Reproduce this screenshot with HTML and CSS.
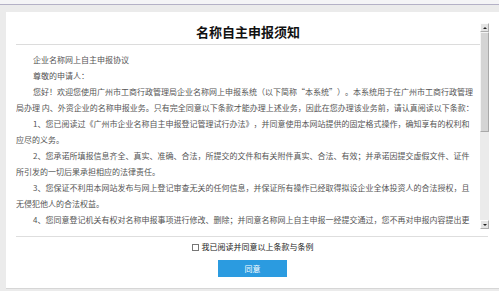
FILE: index.html
```html
<!DOCTYPE html>
<html lang="zh-CN">
<head>
<meta charset="utf-8">
<link rel="stylesheet" href="styles.css">
</head>
<body>
<div class="topbar"></div>
<div class="page">
  <div class="card">
    <div class="scroll">
      <div class="content">
        <h1 class="title">名称自主申报须知</h1>
        <div class="body">
          <p>企业名称网上自主申报协议</p>
          <p>尊敬的申请人：</p>
          <p>您好！欢迎您使用广州市工商行政管理局企业名称网上申报系统（以下简称“本系统”）。本系统用于在广州市工商行政管理局办理 内、外资企业的名称申报业务。只有完全同意以下条款才能办理上述业务，因此在您办理该业务前，请认真阅读以下条款：</p>
          <p>1、您已阅读过《广州市企业名称自主申报登记管理试行办法》，并同意使用本网站提供的固定格式操作，确知享有的权利和应尽的义务。</p>
          <p>2、您承诺所填报信息齐全、真实、准确、合法，所提交的文件和有关附件真实、合法、有效；并承诺因提交虚假文件、证件所引发的一切后果承担相应的法律责任。</p>
          <p>3、您保证不利用本网站发布与网上登记审查无关的任何信息，并保证所有操作已经取得拟设企业全体投资人的合法授权，且无侵犯他人的合法权益。</p>
          <p>4、您同意登记机关有权对名称申报事项进行修改、删除；并同意名称网上自主申报一经提交通过，您不再对申报内容提出更改。</p>
        </div>
      </div>
      <div class="scrollbar">
        <div class="sb-btn"><span class="arrow-up"></span></div>
        <div class="sb-thumb"></div>
        <div class="sb-track"></div>
        <div class="sb-btn"><span class="arrow-down"></span></div>
      </div>
    </div>
    <div class="divider"></div>
    <label class="agree"><span class="check"></span>我已阅读并同意以上条款与条例</label>
    <div class="actions"><button class="btn">同意</button></div>
  </div>
</div>
</body>
</html>
```
FILE: styles.css
```css
html, body {
  margin: 0;
  padding: 0;
}
body {
  background: #ebebeb;
  font-family: "Noto Sans CJK SC", "Liberation Sans", sans-serif;
  width: 499px;
  height: 291px;
  overflow: hidden;
}
.topbar {
  height: 4px;
  background: #f4f4f6;
  border-bottom: 1px solid #b4b1c6;
}
.page {
  padding: 7px 0 0 6px;
}
.card {
  background: #fff;
  height: 277px;
  box-sizing: border-box;
  padding: 11px 10px 0 10px;
  border-bottom: 1px solid #d6d6d6;
  display: flex;
  flex-direction: column;
}
.scroll {
  display: flex;
  height: 206px;
}
.content {
  flex: 1;
  overflow: hidden;
}
.title {
  margin: 0;
  font-size: 13px;
  line-height: 18px;
  font-weight: bold;
  color: #111;
  text-align: center;
  padding-bottom: 3px;
  border-bottom: 1px solid #dcdcdc;
}
.body {
  padding: 7px 5px 0 0;
  font-size: 8px;
  line-height: 16px;
  color: #555;
  text-spacing-trim: space-all;
}
.body p {
  margin: 0;
  text-indent: 17px;
}
.scrollbar {
  width: 9px;
  display: flex;
  flex-direction: column;
  background: #e9e9e9;
}
.sb-btn {
  height: 9px;
  box-sizing: border-box;
  background: #e4e4e4;
  border: 1px solid #adadad;
  border-top-color: #fdfdfd;
  border-left-color: #fdfdfd;
  display: flex;
  align-items: center;
  justify-content: center;
}
.arrow-up {
  width: 0;
  height: 0;
  border-left: 2px solid transparent;
  border-right: 2px solid transparent;
  border-bottom: 2px solid #222;
}
.arrow-down {
  width: 0;
  height: 0;
  border-left: 2px solid transparent;
  border-right: 2px solid transparent;
  border-top: 2px solid #222;
}
.sb-thumb {
  height: 100px;
  box-sizing: border-box;
  background: #d4d4d4;
  border: 1px solid #a9a9a9;
  border-top-color: #f4f4f4;
  border-left-color: #f4f4f4;
}
.sb-track {
  flex: 1;
  background: #ebebeb;
}
.divider {
  margin-top: 7px;
  margin-right: 1px;
  border-top: 1px solid #dedede;
}
.agree {
  margin-top: 3px;
  align-self: center;
  display: flex;
  align-items: center;
  font-size: 8px;
  line-height: 14px;
  color: #222;
}
.check {
  width: 5px;
  height: 5px;
  border: 1px solid #777;
  background: #fff;
  margin-right: 3px;
}
.actions {
  margin-top: 6px;
  display: flex;
  justify-content: center;
}
.btn {
  width: 69px;
  height: 17px;
  border: none;
  padding: 0;
  background: #2b9be0;
  color: #fff;
  font-family: "Noto Sans CJK SC", sans-serif;
  font-size: 8px;
  line-height: 17px;
}
```
